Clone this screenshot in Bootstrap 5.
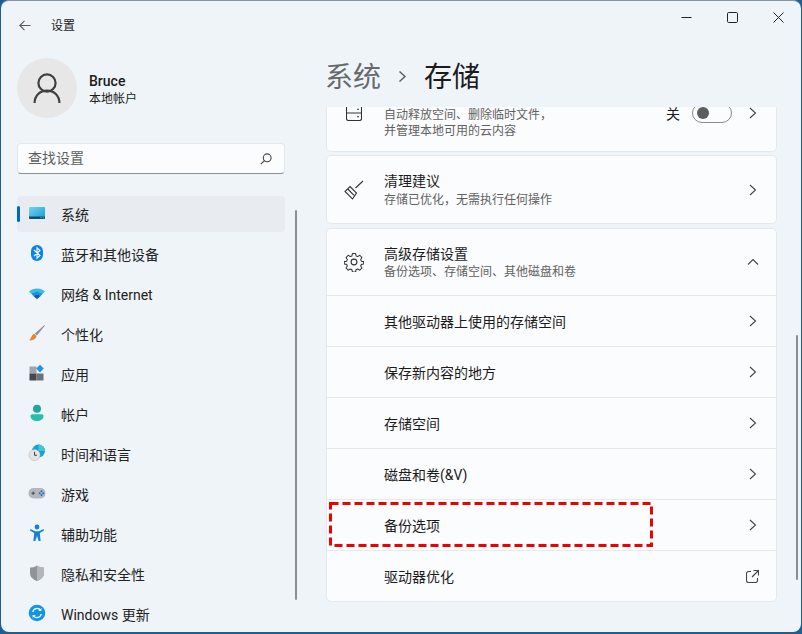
<!DOCTYPE html>
<html lang="zh-CN">
<head>
<meta charset="UTF-8" />
<meta name="viewport" content="width=device-width, initial-scale=1.0" />
<title>设置</title>
<link href="https://cdn.jsdelivr.net/npm/bootstrap@5.3.0/dist/css/bootstrap.min.css" rel="stylesheet" />
<style>
  html, body { height: 100%; overflow: hidden; }
  body {
    background: #1f5f8f;
    font-family: Roboto, "Noto Sans CJK SC", sans-serif;
    font-size: 14px;
    color: #1b1b1b;
  }
  .win {
    width: 800px; height: 632px; margin-left: 1px;
    border-top: 1px solid #7e97ab;
    border-radius: 8px;
    background: #eff4f9;
    overflow: hidden;
  }
  .side { width: 300px; flex: none; position: relative; }
  .titlebar { height: 49px; padding-left: 18px; gap: 20px; font-size: 12px; }
  .profile { height: 60px; margin: 8px 0 0 16px; gap: 12px; }
  .avatar { width: 60px; height: 60px; border-radius: 50%; background: #e7e7e7; }
  .ptext { padding-top: 3px; }
  .pname { font-size: 14px; font-weight: 500; line-height: 18px; }
  .psub { font-size: 12px; line-height: 18px; }
  .searchbox {
    width: 268px; height: 31px; margin: 25px 0 0 16px; padding: 0 12px 0 10px;
    background: #fbfcfe; border: 1px solid #e4e7eb; border-bottom-color: #8c8f93; border-radius: 4px;
    color: #5f5f5f;
  }
  .navstack { margin: 22px 0 0 16px; width: 268px; gap: 4px; }
  .navitem { height: 36px; padding-left: 11px; gap: 15px; border-radius: 4px; position: relative; color: #222; }
  .navitem span { margin-top: 2px; }
  .navitem.on { background: #e8ecf1; }
  .navitem.on::before {
    content: ""; position: absolute; left: 0; top: 10px; width: 3px; height: 16px;
    border-radius: 2px; background: #0067c0;
  }
  .navico { width: 18px; height: 18px; flex: none; margin-top: -2px; }
  .sbar-l { position: absolute; left: 294px; top: 209px; width: 2px; height: 390px; border-radius: 1px; background: #8a8d91; }
  .sbar-r { position: absolute; left: 495px; top: 334px; width: 2px; height: 245px; border-radius: 1px; background: #8a8d91; }
  .mainpane { position: relative; min-width: 0; }
  .winbtns { position: absolute; top: 0; right: 0; }
  .winbtn { width: 46px; height: 32px; }
  .crumb { height: 106px; padding: 52px 0 0 24px; font-size: 28px; line-height: 46px; }
  .crumb .par { color: #676a6d; margin-top: 2px; }
  .crumb .cur { margin-top: 2px; }
  .crumb .sep { height: 46px; margin: 0 17px 0 17px; }
  .scroller { height: 525px; overflow: hidden; padding-left: 25px; }
  .stack { width: 451px; margin-top: -42px; gap: 3px; }
  .tile {
    background: #fbfcfe; border: 1px solid #e5e8ec; border-radius: 5px;
    overflow: hidden;
  }
  .tile-first { height: 87px; padding-top: 8px; }
  .tile-first .ds { padding-top: 20px; }
  .tile-adv { margin-top: 1px; }
  .tilerow { padding-right: 19px; }
  .tileico { width: 57px; padding-right: 3px; flex: none; }
  .tt { line-height: 20px; color: #1b1b1b; }
  .ds { font-size: 12px; line-height: 16px; color: #616161; }
  .sugg .ds { line-height: 18px; }
  .adv-head .tt { line-height: 18px; }
  .adv-head .ds { padding-top: 1px; }
  .adv-head { height: 66px; }
  .line { border-top: 1px solid #e6e8ec; }
  .subrow { height: 51px; padding-left: 57px; }
  .subrow span { margin-top: 2px; }
  .extlink { margin-right: -2px; }
  .upchev { margin-right: -2px; }
  .swlabel { line-height: 12px; margin-top: 2px; }
  .sw {
    width: 40px; height: 20px; border: 1px solid #8a8a8a; border-radius: 10px;
    padding-left: 4px; margin: 0 17px 0 12px;
  }
  .sw i { width: 12px; height: 12px; border-radius: 50%; background: #5d5d5d; display: block; }
  .dash { position: absolute; left: 28px; top: 501px; width: 324px; height: 45px; pointer-events: none; }
</style>
</head>
<body>
<div class="win d-flex">
  <!-- sidebar -->
  <div class="side">
    <div class="titlebar d-flex align-items-center">
      <svg width="12" height="11" viewBox="0 0 12 11" fill="none" stroke="#5a5a5a" stroke-width="1.1"><path d="M11.500 5.500H.8M5.500.8.8 5.500 5.500 10.200"/></svg>
      <span>设置</span>
    </div>
    <div class="profile d-flex align-items-center">
      <div class="avatar d-flex align-items-center justify-content-center">
        <svg width="28" height="32" viewBox="0 0 28 32" fill="none" stroke="#3f3f3f" stroke-width="2.2"><circle cx="14" cy="11" r="8.600"/><path d="M1.600 31c0-7.500 5.400-12.400 12.400-12.400S26.400 23.500 26.400 31"/></svg>
      </div>
      <div class="ptext">
        <div class="pname">Bruce</div>
        <div class="psub">本地帐户</div>
      </div>
    </div>
    <div class="searchbox d-flex align-items-center justify-content-between">
      <span>查找设置</span>
      <svg width="12" height="12" viewBox="0 0 12 12" fill="none" stroke="#444" stroke-width="1.1"><circle cx="7.200" cy="4.800" r="3.900"/><path d="M4.400 7.600.8 11.200"/></svg>
    </div>
    <div class="navstack d-flex flex-column">
      <div class="navitem on d-flex align-items-center">
        <svg class="navico" viewBox="0 0 18 18"><defs><linearGradient id="g1" x1="0" y1="0" x2="1" y2="1"><stop offset="0" stop-color="#6fd6ee"/><stop offset="1" stop-color="#1a9bd0"/></linearGradient></defs><rect x="1" y="3" width="16" height="12" rx="1" fill="url(#g1)"/><path d="M1 12.500h16V14a1 1 0 0 1-1 1H2a1 1 0 0 1-1-1z" fill="#0d4f74"/><path d="M12.500 13.700h1M14.800 13.700h1" stroke="#8fd3ea" stroke-width=".8"/></svg>
        <span>系统</span>
      </div>
      <div class="navitem d-flex align-items-center">
        <svg class="navico" viewBox="0 0 18 18"><rect x="3" y="1" width="12" height="16" rx="6" fill="#0a84e8"/><path d="M6 6l6 5.500-3 2.700V3.800l3 2.700-6 5.500" fill="none" stroke="#fff" stroke-width="1.100"/></svg>
        <span>蓝牙和其他设备</span>
      </div>
      <div class="navitem d-flex align-items-center">
        <svg class="navico" viewBox="0 0 18 18"><path d="M1 7.500C5.500 3.500 12.500 3.500 17 7.500L14.700 9.800C11.300 7.400 6.700 7.400 3.300 9.800z" fill="#36b9ee"/><path d="M3.300 9.800C6.700 7.400 11.300 7.400 14.700 9.800L12.600 11.900C10.400 10.500 7.600 10.500 5.400 11.900z" fill="#1490dc"/><path d="M5.400 11.900C7.600 10.500 10.400 10.500 12.600 11.900L9 15.200z" fill="#0c5fa8"/></svg>
        <span>网络 &amp; Internet</span>
      </div>
      <div class="navitem d-flex align-items-center">
        <svg class="navico" viewBox="0 0 18 18"><path d="M16.500 1 17 1.500 9 11.500 6.800 9.400z" fill="#8f949b"/><path d="M6.300 9.800 8.500 12C8 15 5 16.500 1 16.500 3 15.500 3 11 6.300 9.800z" fill="#f0802c"/></svg>
        <span>个性化</span>
      </div>
      <div class="navitem d-flex align-items-center">
        <svg class="navico" viewBox="0 0 18 18"><rect x="1.500" y="2.500" width="7" height="7" fill="#9fa4ab"/><rect x="1.500" y="9.500" width="7" height="7" fill="#45484d"/><rect x="8.500" y="9.500" width="7" height="7" fill="#6e7278"/><path d="M12 .8 15.800 4.600 12 8.400 8.200 4.600z" fill="#1a96e8"/></svg>
        <span>应用</span>
      </div>
      <div class="navitem d-flex align-items-center">
        <svg class="navico" viewBox="0 0 18 18"><circle cx="9" cy="4.800" r="4" fill="#1fa79b"/><path d="M2.500 12c0-1 .8-1.800 1.800-1.800h9.400c1 0 1.800.8 1.800 1.800 0 3-3 5-6.500 5s-6.500-2-6.500-5z" fill="#26bdae"/></svg>
        <span>帐户</span>
      </div>
      <div class="navitem d-flex align-items-center">
        <svg class="navico" viewBox="0 0 18 18"><circle cx="10.500" cy="7" r="6.500" fill="#1b9fd6"/><path d="M10.500.5A6.500 6.500 0 0 1 17 7h-6.500z" fill="#3cc8d8"/><circle cx="6.500" cy="11" r="5.600" fill="#e4e4e2" stroke="#b5b5b3" stroke-width=".5"/><path d="M6.500 7.800V11.300H9" fill="none" stroke="#444" stroke-width="1"/></svg>
        <span>时间和语言</span>
      </div>
      <div class="navitem d-flex align-items-center">
        <svg class="navico" viewBox="0 0 18 18"><rect x=".5" y="4" width="17" height="10.500" rx="5" fill="#b4b8bd"/><path d="M3.500 9.200h3.400M5.200 7.500v3.400" stroke="#444" stroke-width="1"/><circle cx="13.500" cy="7.300" r="1" fill="#1572c8"/><circle cx="11.700" cy="9.200" r="1" fill="#1572c8"/><circle cx="15.200" cy="9.200" r="1" fill="#1572c8"/><circle cx="13.500" cy="11" r="1" fill="#1572c8"/></svg>
        <span>游戏</span>
      </div>
      <div class="navitem d-flex align-items-center">
        <svg class="navico" viewBox="0 0 18 18"><circle cx="9" cy="3" r="2.400" fill="#1580d8"/><path d="M2.500 5 7 7.300h4L15.500 5 16 6.400 11.800 9l.8 8h-1.900L9 12l-1.700 5H5.400l.8-8L2 6.400z" fill="#1580d8"/></svg>
        <span>辅助功能</span>
      </div>
      <div class="navitem d-flex align-items-center">
        <svg class="navico" viewBox="0 0 18 18"><path d="M9 1.500C11 3 13 3.500 16 3.500V9c0 4-3 6.500-7 8-4-1.500-7-4-7-8V3.500C5 3.500 7 3 9 1.500z" fill="#8f9499"/><path d="M9 1.500C11 3 13 3.500 16 3.500V9c0 4-3 6.500-7 8z" fill="#b3b7bb"/></svg>
        <span>隐私和安全性</span>
      </div>
      <div class="navitem d-flex align-items-center">
        <svg class="navico" viewBox="0 0 18 18"><circle cx="9" cy="9" r="8.300" fill="#1296e4"/><path d="M4.800 8A4.300 4.300 0 0 1 12.500 6.200M13.200 10A4.300 4.300 0 0 1 5.500 11.800" fill="none" stroke="#fff" stroke-width="1.300"/><path d="M13.400 3.900V7H10.300zM4.600 14.100V11H7.700z" fill="#fff"/></svg>
        <span>Windows 更新</span>
      </div>
    </div>
    <div class="sbar-l"></div>
  </div>

  <!-- content -->
  <div class="mainpane flex-grow-1">
    <div class="winbtns d-flex">
      <div class="winbtn d-flex align-items-center justify-content-center"><svg width="11" height="11" viewBox="0 0 11 11" stroke="#222" fill="none"><path d="M.5 5.500h10"/></svg></div>
      <div class="winbtn d-flex align-items-center justify-content-center"><svg width="11" height="11" viewBox="0 0 11 11" stroke="#222" fill="none"><rect x=".5" y=".5" width="10" height="10" rx="1.200"/></svg></div>
      <div class="winbtn d-flex align-items-center justify-content-center"><svg width="11" height="11" viewBox="0 0 11 11" stroke="#222" fill="none"><path d="M.5.500l10 10M10.500.5l-10 10"/></svg></div>
    </div>
    <div class="crumb d-flex align-items-start">
      <span class="par">系统</span>
      <span class="sep d-flex align-items-center"><svg width="9" height="13" viewBox="0 0 9 13" fill="none" stroke="#5e6163" stroke-width="1.500"><path d="M1.500 1.500 7 6.500 1.500 11.500"/></svg></span>
      <span class="cur">存储</span>
    </div>
    <div class="scroller">
      <div class="stack d-flex flex-column">
        <div class="tile tile-first tilerow d-flex align-items-center">
          <div class="tileico d-flex justify-content-center">
            <svg width="16" height="16" viewBox="0 0 16 16" fill="none" stroke="#333" stroke-width="1.100"><rect x=".5" y=".5" width="15" height="15" rx="2"/><path d="M.5 8h15M11 4.300h2M11 11.800h2"/></svg>
          </div>
          <div class="flex-grow-1">
            <div class="ds">自动释放空间、删除临时文件，<br />并管理本地可用的云内容</div>
          </div>
          <span class="swlabel">关</span>
          <div class="sw d-flex align-items-center"><i></i></div>
          <svg width="8" height="12" viewBox="0 0 8 12" fill="none" stroke="#444" stroke-width="1.100"><path d="M1 1l5.500 5L1 11"/></svg>
        </div>
        <div class="tile sugg tilerow d-flex align-items-center" style="height:69px">
          <div class="tileico d-flex justify-content-center">
            <svg width="20" height="20" viewBox="0 0 20 20" fill="none" stroke="#333" stroke-width="1.100"><path d="M19 1 11.500 8M6 6.500 12.500 13 8.500 19 1 11.500zM3.800 9 10 15.300"/></svg>
          </div>
          <div class="flex-grow-1">
            <div class="tt">清理建议</div>
            <div class="ds">存储已优化，无需执行任何操作</div>
          </div>
          <svg width="8" height="12" viewBox="0 0 8 12" fill="none" stroke="#444" stroke-width="1.100"><path d="M1 1l5.500 5L1 11"/></svg>
        </div>
        <div class="tile tile-adv">
          <div class="adv-head tilerow d-flex align-items-center">
            <div class="tileico d-flex justify-content-center">
              <svg width="20" height="20" viewBox="0 0 20 20" fill="none" stroke="#333" stroke-width="1.100" stroke-linejoin="round"><circle cx="10" cy="10" r="2.900"/><path d="M8.300 1.200h3.400l.5 2.500 1.700.7 2.200-1.400 2.300 2.400-1.400 2.100.7 1.700 2.500.5v2.400l-2.500.5-.7 1.700 1.400 2.100-2.300 2.400-2.200-1.400-1.700.7-.5 2.500H8.300l-.5-2.500-1.700-.7-2.200 1.400-2.300-2.400 1.400-2.100-.7-1.700-2.500-.5V9.700l2.500-.5.7-1.700-1.400-2.100 2.300-2.400 2.200 1.400 1.700-.7z" transform="translate(.5 .4) scale(.95)"/></svg>
            </div>
            <div class="flex-grow-1">
              <div class="tt">高级存储设置</div>
              <div class="ds">备份选项、存储空间、其他磁盘和卷</div>
            </div>
            <svg class="upchev" width="12" height="8" viewBox="0 0 12 8" fill="none" stroke="#444" stroke-width="1.100"><path d="M1 6.500 6 1.500l5 5"/></svg>
          </div>
          <div class="line tilerow subrow d-flex align-items-center justify-content-between"><span>其他驱动器上使用的存储空间</span><svg width="8" height="12" viewBox="0 0 8 12" fill="none" stroke="#444" stroke-width="1.100"><path d="M1 1l5.500 5L1 11"/></svg></div>
          <div class="line tilerow subrow d-flex align-items-center justify-content-between"><span>保存新内容的地方</span><svg width="8" height="12" viewBox="0 0 8 12" fill="none" stroke="#444" stroke-width="1.100"><path d="M1 1l5.500 5L1 11"/></svg></div>
          <div class="line tilerow subrow d-flex align-items-center justify-content-between"><span>存储空间</span><svg width="8" height="12" viewBox="0 0 8 12" fill="none" stroke="#444" stroke-width="1.100"><path d="M1 1l5.500 5L1 11"/></svg></div>
          <div class="line tilerow subrow d-flex align-items-center justify-content-between"><span>磁盘和卷(&amp;V)</span><svg width="8" height="12" viewBox="0 0 8 12" fill="none" stroke="#444" stroke-width="1.100"><path d="M1 1l5.500 5L1 11"/></svg></div>
          <div class="line tilerow subrow d-flex align-items-center justify-content-between"><span>备份选项</span><svg width="8" height="12" viewBox="0 0 8 12" fill="none" stroke="#444" stroke-width="1.100"><path d="M1 1l5.500 5L1 11"/></svg></div>
          <div class="line tilerow subrow d-flex align-items-center justify-content-between"><span>驱动器优化</span><svg class="extlink" width="13" height="13" viewBox="0 0 13 13" fill="none" stroke="#444" stroke-width="1.100"><path d="M5 1.500H2.500a2 2 0 0 0-2 2v7a2 2 0 0 0 2 2h7a2 2 0 0 0 2-2V8M7.500.5h5v5M12.500.5 6 7"/></svg></div>
        </div>
      </div>
    </div>
    <div class="sbar-r"></div>
    <svg class="dash" viewBox="0 0 324 45" fill="none" stroke="#f00000" stroke-width="3" stroke-dasharray="8 4"><rect x="1.500" y="1.500" width="321" height="42"/></svg>
  </div>
</div>
<script src="https://cdn.jsdelivr.net/npm/bootstrap@5.3.0/dist/js/bootstrap.bundle.min.js"></script>
</body>
</html>
